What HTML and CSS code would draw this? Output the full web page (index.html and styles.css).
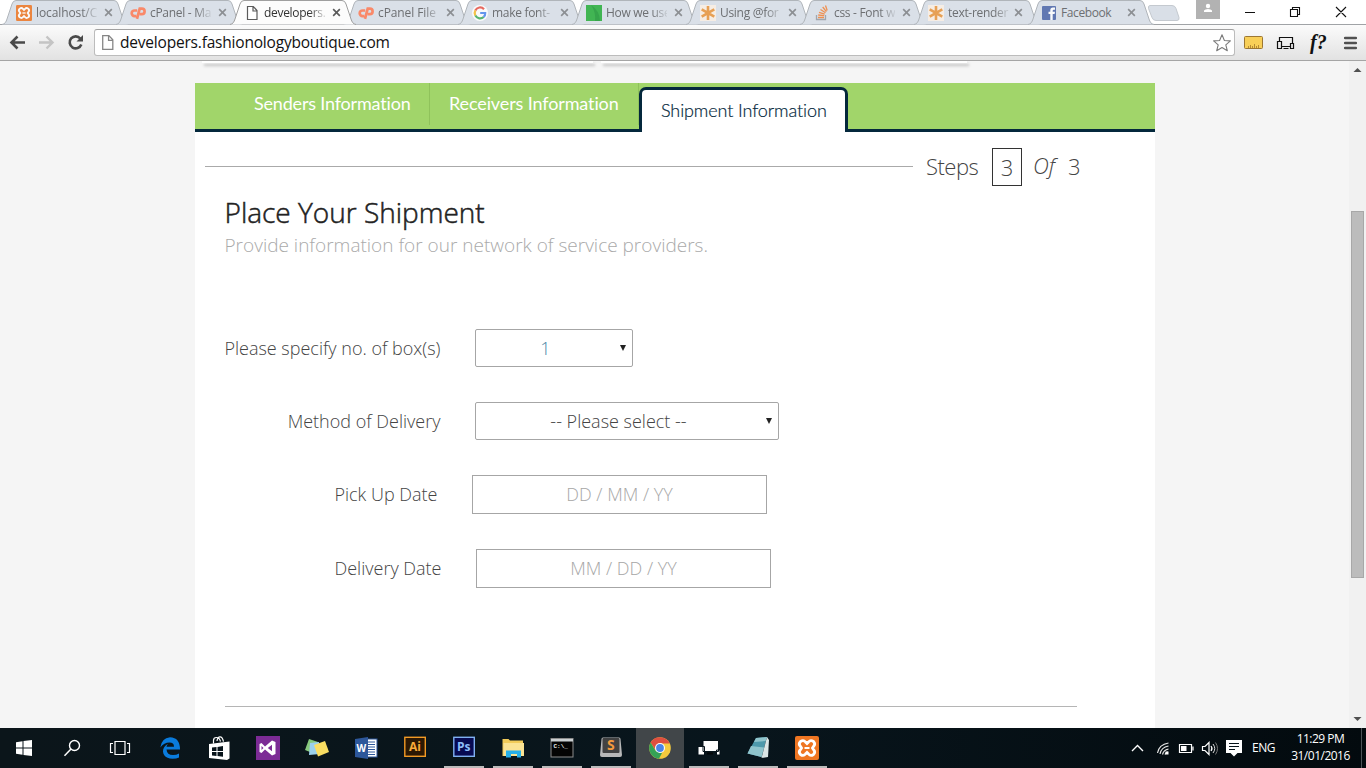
FILE: index.html
```
<!DOCTYPE html>
<html lang="en">
<head>
<meta charset="utf-8">
<title>developers.fashionologyboutique.com</title>
<link rel="stylesheet" href="styles.css">
</head>
<body>
<svg class="defs" width="0" height="0">
  <defs>
    <symbol id="shape" viewBox="0 0 126 25"><path d="M0 24.5C3 24 4 22 5 19L10 4Q11 .5 14 .5H112Q115 .5 116 4L121 19C122 22 123 24 126 24.5"/></symbol>
    <symbol id="close" viewBox="0 0 10 10"><path d="M1.3 1.3 8.7 8.7M8.7 1.3 1.3 8.7" fill="none" stroke="currentColor" stroke-width="1.8"/></symbol>
    <symbol id="page" viewBox="0 0 16 16"><path d="M3.5 1.5h5.8l3.7 4v9H3.500Z M9 1.500V6h4" fill="#fff" stroke="currentColor" stroke-width="1.200"/></symbol>
    <symbol id="xampp" viewBox="0 0 24 24"><rect width="24" height="24" rx="2" fill="#ef7622"/><path d="M5.500 5.500q3-2 5 .500l1.500 1.500 1.500-1.500q2-2.500 5-.500 2.500 2.500 0 5L17.500 12l1 1.500q2.500 2.500 0 5-3 2-5-.500L12 16.500 10.500 18q-2 2.500-5 .500-2.500-2.500 0-5l1-1.500-1-1.500q-2.500-2.500 0-5Z" fill="none" stroke="#fff" stroke-width="2.800"/><path d="M9.500 12h5" stroke="#fff" stroke-width="2"/></symbol>
    <symbol id="cpanel" viewBox="0 0 16 16"><path d="M7.200 5.500H4.500a2.800 2.800 0 0 0 0 5.600h1.700M7 13.800 9.700 3.700h2.200a2.500 2.500 0 0 1 0 5.400H9.700" fill="none" stroke="#ff7a54" stroke-width="2.700"/></symbol>
    <symbol id="star6" viewBox="0 0 16 16"><rect width="16" height="16" fill="#fbf0e4"/><path d="M8 1v14M1.700 4.300l12.600 7.400M14.300 4.300 1.700 11.700" stroke="#ea963c" stroke-width="2.600"/></symbol>
  </defs>
</svg>

<header class="tabstrip">
  <div class="tab"><svg class="tab-bg"><use href="#shape"/></svg><svg class="fav"><use href="#xampp"/></svg><span class="tab-title">localhost/C</span><svg class="close"><use href="#close"/></svg></div>
  <div class="tab"><svg class="tab-bg"><use href="#shape"/></svg><svg class="fav"><use href="#cpanel"/></svg><span class="tab-title">cPanel - Ma</span><svg class="close"><use href="#close"/></svg></div>
  <div class="tab active"><svg class="tab-bg"><use href="#shape"/></svg><svg class="fav"><use href="#page"/></svg><span class="tab-title">developers.</span><svg class="close"><use href="#close"/></svg></div>
  <div class="tab"><svg class="tab-bg"><use href="#shape"/></svg><svg class="fav"><use href="#cpanel"/></svg><span class="tab-title">cPanel File</span><svg class="close"><use href="#close"/></svg></div>
  <div class="tab"><svg class="tab-bg"><use href="#shape"/></svg><svg class="fav" viewBox="0 0 16 16"><circle cx="8" cy="8" r="8" fill="#fff"/><g fill="none" stroke-width="2.200"><path d="M12 4.200A5.300 5.300 0 0 0 3.300 5.500" stroke="#ea5548"/><path d="M3.400 5.400a5.300 5.300 0 0 0 0 5.200" stroke="#f8bd2c"/><path d="M3.400 10.600A5.300 5.300 0 0 0 11.700 12" stroke="#42ad5c"/><path d="M11.600 12A5 5 0 0 0 13.200 8H8.200" stroke="#4f89ee"/></g></svg><span class="tab-title">make font-</span><svg class="close"><use href="#close"/></svg></div>
  <div class="tab"><svg class="tab-bg"><use href="#shape"/></svg><svg class="fav" viewBox="0 0 16 16"><rect width="16" height="16" fill="#27ae3a"/><path d="M5 0q5 7 4 16h5Q14 6 5 0Z" fill="#1a9a30"/></svg><span class="tab-title">How we use</span><svg class="close"><use href="#close"/></svg></div>
  <div class="tab"><svg class="tab-bg"><use href="#shape"/></svg><svg class="fav"><use href="#star6"/></svg><span class="tab-title">Using @for</span><svg class="close"><use href="#close"/></svg></div>
  <div class="tab"><svg class="tab-bg"><use href="#shape"/></svg><svg class="fav" viewBox="0 0 16 16"><path d="M2.500 10v4.500h9V10" fill="none" stroke="#989da3" stroke-width="1.300"/><path d="M4 12.500h6M4.200 10l6 .700M5 7.300l5.700 1.800M6.500 4.500l5 3.300M8.700 2l3.700 4.700M11.500.500l1.700 5" stroke="#f28338" stroke-width="1.300"/></svg><span class="tab-title">css - Font w</span><svg class="close"><use href="#close"/></svg></div>
  <div class="tab"><svg class="tab-bg"><use href="#shape"/></svg><svg class="fav"><use href="#star6"/></svg><span class="tab-title">text-render</span><svg class="close"><use href="#close"/></svg></div>
  <div class="tab"><svg class="tab-bg"><use href="#shape"/></svg><svg class="fav fb" viewBox="0 0 16 16"><rect x="1" y="1" width="14" height="14" rx="1" fill="#4c67a9"/><path d="M9.300 15V9H7.500V6.700h1.800V5.200q0-2.700 2.700-2.700h2v2.300h-1.300q-1 0-1 1v.900H14L13.600 9h-1.900v6Z" fill="#fff"/></svg><span class="tab-title">Facebook</span><svg class="close"><use href="#close"/></svg></div>
  <svg class="newtab" viewBox="0 0 34 17"><path d="M3 .500h22q3 0 4 3l3 9q.500 3-2 3H9q-3 0-4-3L1.500 3.500q-.500-3 1.500-3Z" fill="#d9dfe7" stroke="#c4c9cf"/></svg>
  <div class="winctl">
    <svg class="user" viewBox="0 0 24 19"><rect width="24" height="19" fill="#b2b2b2"/><circle cx="12" cy="6" r="2.200" fill="#fff"/><path d="M8 12v-1.500q1-1.500 4-1.500t4 1.500V12Z" fill="#fff"/></svg>
    <svg class="winbtns" viewBox="0 0 110 24"><path d="M1 12.500h10M46.500 9.500h7v7h-7ZM48.500 9V7.500h7v7h-2M92 7l10 10M102 7l-10 10" fill="none" stroke="#111" stroke-width="1.100"/></svg>
  </div>
</header>

<div class="toolbar">
  <svg class="navicons" viewBox="0 0 94 36"><path d="M25 17.500H12M17.500 11.500l-6 6 6 6" fill="none" stroke="#4a4a4a" stroke-width="2.600"/><path d="M39 17.500h13M46.500 11.500l6 6-6 6" fill="none" stroke="#c4c4c4" stroke-width="2.400"/><path d="M80.300 13.500a6 6 0 1 0 1 6" fill="none" stroke="#4a4a4a" stroke-width="2.600"/><path d="M83 10v6.500h-6.500Z" fill="#4a4a4a"/></svg>
  <div class="omnibox">
    <svg class="pageicon"><use href="#page"/></svg>
    <span class="url">developers.fashionologyboutique.com</span>
    <svg class="bookmark" viewBox="0 0 20 20"><path d="m10 1.800 2.400 5.700 6 .400-4.600 3.900 1.500 5.900L10 14.500l-5.300 3.200 1.500-5.900L1.600 7.900l6-.400Z" fill="#fff" stroke="#7a7a7a" stroke-width="1.100" stroke-linejoin="round"/></svg>
  </div>
  <svg class="ruler" viewBox="0 0 20 16"><rect x=".5" y="1.500" width="18" height="12" rx="1" fill="#f8cf58" stroke="#9c7733"/><path d="M4.500 13v-2M6.500 13v-3M8.500 13v-2M10.500 13V9M12.500 13v-2M14.500 13v-3" stroke="#b58a34"/></svg>
  <svg class="devices" viewBox="0 0 18 14"><path d="M2.500 5V1.500h13V7M5 10.500h8M6.500 12.500h5M.500 5.500h4v7h-4ZM13.500 7.500h3v5h-3Z" fill="none" stroke="#111" stroke-width="1.200"/></svg>
  <span class="ffont">f?</span>
  <svg class="menu" viewBox="0 0 13 14"><path d="M1.200 2h10.600M1.200 7h10.600M1.200 12h10.600" stroke="#505050" stroke-width="2.600" stroke-linecap="round"/></svg>
</div>

<div class="viewport">
  <div class="page">
    <div class="cards"><div class="card wide"></div><div class="card"></div></div>
    <main class="sheet">
      <nav class="steps-nav">
        <a class="step-link first">Senders Information</a>
        <a class="step-link second">Receivers Information</a>
        <a class="step-link current">Shipment Information</a>
      </nav>
      <div class="progress">
        <div class="rule"></div>
        <span class="steps-word">Steps</span>
        <span class="step-box">3</span>
        <span class="of">Of</span>
        <span class="total">3</span>
      </div>
      <h1>Place Your Shipment</h1>
      <p class="lead">Provide information for our network of service providers.</p>
      <form class="form">
        <div class="row"><label>Please specify no. of box(s)</label><div class="field select small"><span class="count">1</span><i class="caret"></i></div></div>
        <div class="row"><label>Method of Delivery</label><div class="field select"><span>-- Please select --</span><i class="caret"></i></div></div>
        <div class="row shifted"><label>Pick Up Date</label><div class="field date"><span>DD / MM / YY</span></div></div>
        <div class="row last"><label>Delivery Date</label><div class="field date"><span>MM / DD / YY</span></div></div>
      </form>
      <div class="bottom-rule"></div>
    </main>
  </div>
  <div class="scrollbar">
    <svg class="arrow" viewBox="0 0 17 17"><path d="M4.500 11 8.500 7l4 4Z" fill="#505050"/></svg>
    <div class="thumb"></div>
    <svg class="arrow" viewBox="0 0 17 17"><path d="m4.500 6 4 4 4-4Z" fill="#505050"/></svg>
  </div>
</div>

<footer class="taskbar">
  <div class="apps">
    <div class="app"><svg viewBox="0 0 24 24"><path d="M4 6.200 10.500 5.200V11.500H4ZM11.500 5 20 4v7.500h-8.500ZM4 12.500h6.500v6.300L4 17.800ZM11.500 12.500H20V20l-8.500-1Z" fill="#fff"/></svg></div>
    <div class="app"><svg viewBox="0 0 24 24"><circle cx="14.500" cy="9.500" r="5" fill="none" stroke="#fff" stroke-width="1.400"/><path d="m11 13-6.500 6.800" stroke="#fff" stroke-width="1.500"/></svg></div>
    <div class="app"><svg viewBox="0 0 24 24"><path d="M7 5.500h10v13H7ZM5 7.500H2.500v9H5M19 7.500h2.500v9H19" fill="none" stroke="#fff" stroke-width="1.200"/></svg></div>
    <div class="app"><svg viewBox="0 0 24 24"><path d="M2.300 11.500Q3.500 2 12 1.200 22 1.500 22 13.500H8.500q.500 5.500 6.500 5.500 3.500 0 6-1.600v4Q18.500 22.800 14.500 22.800C7 22.800 3 17 6 11.500 7.500 9 10 8 10 8Q8.500 9.500 8.500 10.700H16Q16 6.500 11.500 6.500 6 6.500 2.300 11.500Z" fill="#0a7bdc"/></svg></div>
    <div class="app"><svg viewBox="0 0 24 24"><path d="M2 8 22.500 5.500V22.500L20 24 2 22Z" fill="#fff"/><path d="M6.500 7.500V4.500q0-3 3-3t4 4M10 5Q10.500.8 13 .8t3.500 4.800" fill="none" stroke="#fff" stroke-width="1.200"/><path d="M5 11.500l4.500-.5v4H5ZM10.500 10.900 16 10v5h-5.500ZM5 16h4.500v4L5 19.500ZM10.500 16H16v4.800L10.500 20Z" fill="#07131a"/></svg></div>
    <div class="app"><svg viewBox="0 0 24 24"><path d="M0 0h24v24H0Z" fill="#7c2b95"/><path d="M3.500 8v8l2 1 3.500-3.500 7 6 3.500-1.500V6L16 4.500l-7 6L5.500 7ZM5.500 10v4l2-2ZM16 8.700V15.300L11.800 12Z" fill="#fff" fill-rule="evenodd"/></svg></div>
    <div class="app"><svg viewBox="0 0 24 24"><path d="M4 3 13 6 10 18 0 14Z" fill="#87c97d"/><path d="m5 7 9-1 1 12-11 1Z" fill="#9bd0ec"/><path d="m9 9 11-4 4 11-11 4.500Z" fill="#f9dd62"/></svg></div>
    <div class="app"><svg viewBox="0 0 24 24"><rect x="12" y="3" width="11" height="18" fill="#fff" stroke="#2d579a"/><path d="M14 6h7M14 8.500h7M14 11h7M14 13.500h7M14 16h7M14 18.500h7" stroke="#2d579a"/><path d="M1 3 14 1v22L1 21Z" fill="#2d579a"/><text x="2.500" y="16" class="g-word">W</text></svg></div>
    <div class="app"><svg viewBox="0 0 24 24"><rect x="1.800" y="1.300" width="20.500" height="19" fill="#2c1803" stroke="#f29a25" stroke-width="1.400"/><text x="6" y="15" class="g-ai">Ai</text></svg></div>
    <div class="app run"><svg viewBox="0 0 24 24"><rect x="1.800" y="1.300" width="20.500" height="19" fill="#070a52" stroke="#7fb0f2" stroke-width="1.400"/><text x="5" y="15" class="g-ps">Ps</text></svg></div>
    <div class="app run"><svg viewBox="0 0 24 24"><path d="M1.500 3h6L9 4.500h13V20H1.500Z" fill="#f2cb59"/><path d="M2.500 7h20.500v13H2.500Z" fill="#fbe394"/><path d="M5 21.500v-7h15v7h-4v-3.500h-6v3.500Z" fill="#27b0e9"/></svg></div>
    <div class="app run"><svg viewBox="0 0 24 24"><rect x="1" y="2.500" width="22" height="18.500" fill="#040404" stroke="#8c8c8c"/><path d="M1 3h22v2.500H1Z" fill="#cbd0d2"/><text x="3.500" y="12" class="g-cmd">C:\_</text></svg></div>
    <div class="app run"><svg viewBox="0 0 24 24"><path d="M2.500 3q0-1.500 1.500-1.500h16q1.500 0 1.500 1.500L23 19q0 2-2 2H3q-2 0-2-2Z" fill="#b8b8b8"/><rect x="3.500" y="2" width="17" height="15" rx="1" fill="#424242"/><text x="8" y="14" class="g-s">S</text></svg></div>
    <div class="app run on"><svg viewBox="0 0 24 24"><circle cx="12" cy="12" r="10.800" fill="#f4ca3e"/><path d="M2.600 6.600A10.800 10.800 0 0 1 21.700 7.400H12L7.500 14Z" fill="#df4f40"/><path d="M2.600 6.600 7.500 14.500 14 17 11 22.800A10.800 10.800 0 0 1 2.600 6.600Z" fill="#35a256"/><circle cx="12" cy="12" r="5" fill="#fff"/><circle cx="12" cy="12" r="3.900" fill="#4a84e8"/></svg></div>
    <div class="app run"><svg viewBox="0 0 24 24"><path d="M6 4.500h15.500V15.500H6ZM1 10.500h6.500V19H1ZM19.500 14H23v5h-3.500Z" fill="#fff" stroke="#07131a"/><path d="M10 17.500h6" stroke="#030608" stroke-width="2"/></svg></div>
    <div class="app run"><svg viewBox="0 0 24 24"><path d="m10 2 11-1-5.500 20L1.500 17.500Z" fill="#4d99ab"/><path d="m10 2 11-1-1.500 4L8 6ZM5 10l13 1.500-2.500 9.500L1.500 17.500Z" fill="#8fc4cc"/><path d="m21 1 2 3-1 17-6.500 1Z" fill="#dbe6e6"/></svg></div>
    <div class="app run"><svg><use href="#xampp"/></svg></div>
  </div>
  <div class="tray">
    <svg class="trayicons" viewBox="0 0 114 24"><path d="m2 15 5.500-5.500L13 15" fill="none" stroke="#fff" stroke-width="1.400"/><g fill="none" stroke="#e8e8e8" stroke-width="1.200"><path d="M27.500 17Q29 8.500 38.500 7M30 18q1-6.500 8.500-8M32.500 18.500q1-4.500 6-5.500M35 18.500q.500-2 3-2.500"/></g><rect x="35.500" y="15.500" width="3" height="3" fill="#fff"/><path d="M49.500 8.500h12v8h-12ZM63 10.500v4" fill="none" stroke="#fff" stroke-width="1.200"/><path d="M51 10h5.500v5H51Z" fill="#fff"/><path d="M72.500 10.500h2.500l4-4v12l-4-4h-2.500ZM81 10q2 2.500 0 5" fill="none" stroke="#fff" stroke-width="1.200"/><path d="M83 8q3.500 4.500 0 9" fill="none" stroke="#ddd"/><path d="M85.500 6.500q4 6 0 12" fill="none" stroke="#777"/><path d="M96 4h16v13h-4.500L104 20.500 100.500 17H96Z" fill="#fff"/><path d="M99 7.500h10M99 10.500h10M99 13.500h6" stroke="#07131a"/></svg>
    <span class="lang">ENG</span>
    <div class="clock"><span>11:29 PM</span><span>31/01/2016</span></div>
  </div>
</footer>
</body>
</html>
```
FILE: styles.css
```
* { box-sizing: border-box; }
html, body { margin: 0; height: 100%; overflow: hidden; }
body { display: flex; flex-direction: column; width: 1366px; height: 768px; font-family: "Open Sans", "Noto Sans", sans-serif; background: #f5f5f5; }
svg { display: block; flex: none; overflow: visible; }
.defs { position: absolute; }

/* browser tabs */
.tabstrip { display: flex; height: 24px; padding-left: 2px; background: #fff; flex: none; }
.tab { position: relative; isolation: isolate; display: flex; align-items: center; width: 114px; flex: none; height: 25px; padding-left: 14px; color: #8c8f93; }
.tab-bg { position: absolute; left: 0; top: 0; width: 126px; height: 25px; z-index: -1; fill: #dae0e8; stroke: #b0b5ba; }
.tab.active { z-index: 2; color: #5a5a5a; }
.tab.active .tab-bg { fill: #fcfcfc; stroke: #9f9f9f; }
.fav { width: 16px; height: 16px; opacity: .85; }
.fav.fb { margin-left: -1px; }
.tab.active .fav { opacity: 1; }
.tab-title { width: 61px; margin-left: 4px; font-size: 12px; line-height: 24px; letter-spacing: -.3px; color: #6d6f72; white-space: nowrap; -webkit-mask-image: linear-gradient(90deg, #000 75%, rgba(0,0,0,.15)); mask-image: linear-gradient(90deg, #000 75%, rgba(0,0,0,.15)); }
.tab:nth-child(1) .tab-title, .tab:nth-child(4) .tab-title { letter-spacing: -.1px; }
.tab:nth-child(10) .tab-title { letter-spacing: -.4px; -webkit-mask-image: none; mask-image: none; }
.tab.active .tab-title { color: #333; }
.close { width: 9px; height: 9px; margin-left: 7px; }
.tab:nth-child(n+9) .close { margin-left: 5px; }
.newtab { width: 34px; height: 17px; margin: 5px 0 0 5px; }
.winctl { display: flex; margin-left: auto; }
.user { width: 24px; height: 19px; }
.winbtns { width: 110px; height: 24px; margin: 0 12px 0 24px; }

/* toolbar */
.toolbar { display: flex; align-items: center; flex: none; height: 37px; background: linear-gradient(#fbfbfb, #e2e2e2); border-top: 1px solid #a0a3a6; border-bottom: 1px solid #a5a5a5; }
.navicons { width: 94px; height: 36px; }
.omnibox { display: flex; align-items: center; width: 1141px; height: 27px; padding: 0 2px 0 4px; background: #fff; border: 1px solid #bcbcbc; border-top-color: #a0a0a0; border-radius: 3px; }
.pageicon { width: 17px; height: 17px; color: #858585; }
.url { margin-left: 4px; flex: 1; padding-bottom: 1px; font-size: 15.500px; line-height: 23px; letter-spacing: -.2px; color: #111; }
.bookmark { width: 20px; height: 20px; }
.ruler { width: 20px; height: 16px; margin-left: 9px; }
.devices { width: 18px; height: 14px; margin-left: 13px; }
.ffont { width: 20px; margin-left: 15px; padding-bottom: 2px; font: italic bold 20px/24px "Liberation Serif", serif; color: #111; }
.menu { width: 13px; height: 14px; margin-left: 14px; }

/* page */
.viewport { display: flex; flex: 1; min-height: 0; overflow: hidden; }
.page { flex: 1; min-width: 0; }
.cards { display: flex; gap: 8px; height: 22px; padding-left: 202px; }
.card { width: 366px; height: 2px; background: #fff; box-shadow: 2px 3px 3px #bdbdbd; }
.card.wide { width: 391px; }
.sheet { width: 960px; height: 645px; margin-left: 195px; background: #fff; overflow: hidden; }
.steps-nav { display: flex; align-items: flex-start; height: 49px; background: #a1d56a; border-bottom: 3px solid #04283c; color: #fff; }
.step-link { display: block; height: 42px; font: 400 18px/40px Lato, sans-serif; white-space: nowrap; border-right: 1px solid #8fc25b; }
.step-link.first { width: 235px; padding-left: 59px; letter-spacing: -.18px; }
.step-link.second { width: 209px; padding-left: 19px; letter-spacing: -.12px; }
.step-link.current { height: 45px; width: 209px; margin-top: 4px; padding-left: 19px; font-weight: 300; letter-spacing: -.1px; line-height: 41px; color: #04283c; -webkit-text-stroke: .2px #04283c; background: #fff; border: 3px solid #04283c; border-bottom: 0; border-radius: 7px 7px 0 0; }
.progress { display: flex; height: 70px; padding-left: 10px; font-size: 22px; font-weight: 300; line-height: 30px; color: #444; }
.rule { width: 708px; height: 1px; margin-top: 34px; background: #aaa; }
.steps-word { width: 53px; margin: 19px 0 0 13px; letter-spacing: -.5px; white-space: nowrap; }
.step-box { width: 30px; height: 38px; margin: 16px 0 0 13px; border: 1px solid #333; text-align: center; line-height: 36px; }
.of { width: 26px; margin: 18px 0 0 11px; font-style: italic; }
.total { margin: 19px 0 0 9px; }
h1 { margin: -11px 0 0 29.500px; font-size: 28px; line-height: 42px; font-weight: 300; color: #222; -webkit-text-stroke: .5px #222; white-space: nowrap; }
.lead { margin: -1px 0 0 29.500px; font-size: 19px; line-height: 26px; font-weight: 300; color: #aaa; white-space: nowrap; }
.form { display: flex; flex-direction: column; gap: 35px; padding: 71px 0 0 29px; font-size: 18px; font-weight: 300; color: #444; }
.row { display: flex; gap: 34.500px; align-items: flex-start; line-height: 38px; }
.row label { width: 216.500px; text-align: right; white-space: nowrap; }
.row.shifted label { width: 213.500px; }
.row.last label { width: 217.500px; }
.field { position: relative; display: flex; width: 304px; height: 38px; border: 1px solid #a6a6a6; justify-content: center; line-height: 36px; white-space: nowrap; }
.field.select { border-radius: 2px; padding-right: 17px; }
.field.small { width: 158px; }
.count { color: #4c86a8; }
.field.date { width: 295px; height: 39px; color: #a6a6a6; line-height: 37px; }
.caret { position: absolute; right: 6px; top: 15px; border: 3.500px solid transparent; border-top: 6px solid #222; border-bottom: 0; }
.bottom-rule { width: 852px; height: 1px; margin: 118px 0 0 30px; background: #b5b5b5; }
.scrollbar { display: flex; flex-direction: column; width: 17px; background: #f1f1f1; }
.arrow { width: 17px; height: 17px; }
.thumb { width: 13px; height: 367px; margin: 133px 0 133px 2px; background: #bcbcbc; border: 1px solid #a8a8a8; }

/* taskbar */
.taskbar { display: flex; height: 40px; flex: none; background: linear-gradient(90deg, #0b151a, #08151c 55%, #030a0e); color: #fff; }
.apps { display: flex; gap: 1px; }
.app { display: flex; width: 48px; height: 40px; justify-content: center; padding-top: 8px; }
.app:nth-child(-n+3) { margin-right: -1px; }
.app:nth-child(4) { margin-left: 2px; }
.app svg { width: 24px; height: 24px; }
.app.run { background: linear-gradient(#bbb, #bbb) 50% 100% / 40px 2px no-repeat; }
.app.run.on { background: #414649; }
.g-word { font: bold 10px "Open Sans"; fill: #fff; }
.g-ai, .g-ps { font: 700 12px "Open Sans"; fill: #f8aa39; }
.g-ps { fill: #8dbdfa; }
.g-cmd { font: bold 6px "Liberation Mono"; fill: #eee; }
.g-s { font: bold 14px "Open Sans"; fill: #f49a3d; }
.tray { position: relative; display: flex; margin-left: auto; padding-right: 5px; }
.tray::after { content: ""; position: absolute; right: 4px; top: 0; width: 1px; height: 40px; background: #4c5357; }
.trayicons { width: 114px; height: 24px; margin-top: 8px; }
.lang { margin-left: 8px; width: 24px; font-size: 12px; line-height: 39px; letter-spacing: -.5px; }
.clock { display: flex; flex-direction: column; width: 77px; margin-left: 8px; padding: 2px 4px 0 0; text-align: center; font-size: 12px; line-height: 17px; letter-spacing: -.5px; white-space: nowrap; }
```
